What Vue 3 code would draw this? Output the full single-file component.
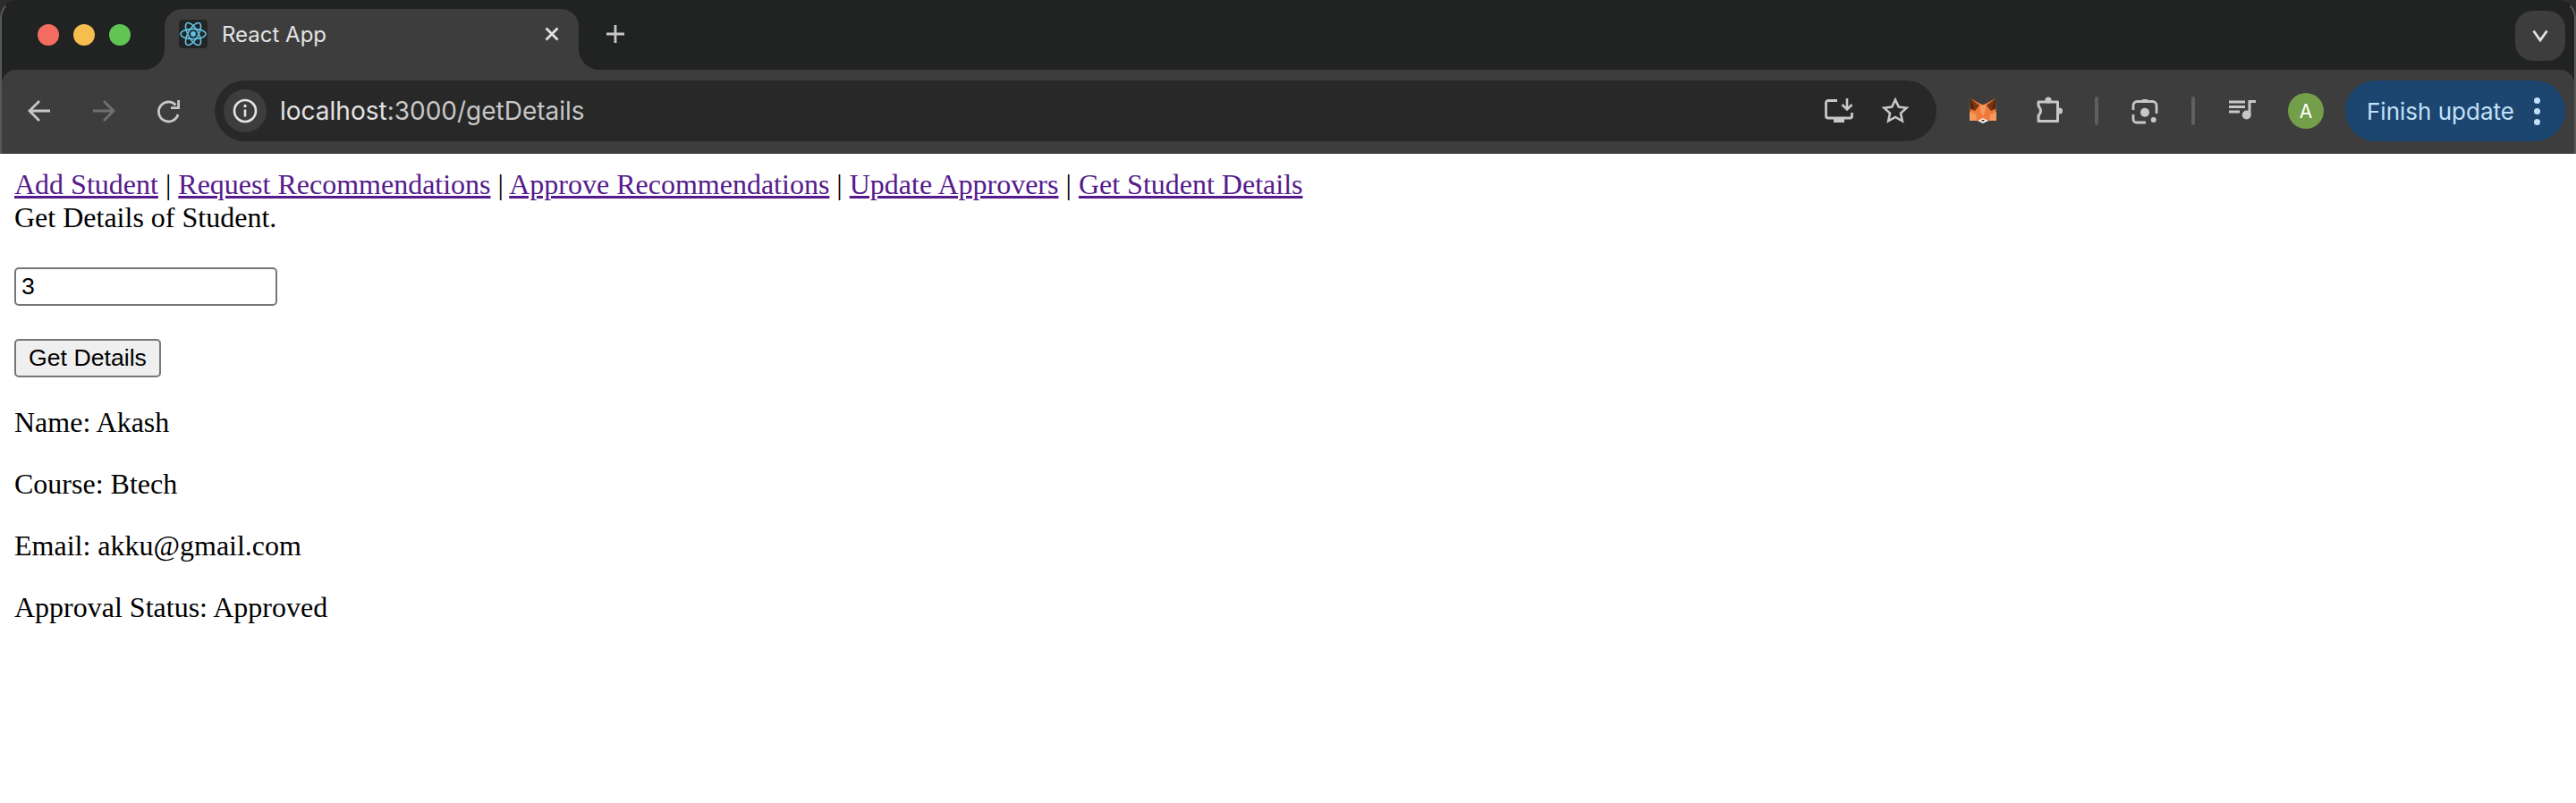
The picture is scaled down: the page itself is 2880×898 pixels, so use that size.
<script setup>
import { ref } from 'vue'

const navLinks = ['Add Student', 'Request Recommendations', 'Approve Recommendations', 'Update Approvers', 'Get Student Details']
const studentId = ref('3')
const details = [
  'Name: Akash',
  'Course: Btech',
  'Email: akku@gmail.com',
  'Approval Status: Approved'
]
</script>

<template>
  <div class="browser">
    <div class="frame">
      <div class="tabstrip">
        <div class="lights">
          <span class="light red"></span>
          <span class="light yellow"></span>
          <span class="light green"></span>
        </div>
        <div class="tab">
          <svg class="favicon" viewBox="0 0 32 32" width="32" height="32">
            <rect width="32" height="32" rx="4" fill="#222524" />
            <g fill="none" stroke="#61c3e6" stroke-width="1.6">
              <ellipse cx="16" cy="16" rx="14" ry="5.6" />
              <ellipse cx="16" cy="16" rx="14" ry="5.6" transform="rotate(60 16 16)" />
              <ellipse cx="16" cy="16" rx="14" ry="5.6" transform="rotate(120 16 16)" />
            </g>
            <circle cx="16" cy="16" r="2.9" fill="#61c3e6" />
          </svg>
          <span class="tab-title">React App</span>
          <svg class="tab-close" viewBox="0 0 16 16" width="16" height="16">
            <path d="M1.5 1.5 14.5 14.5M14.5 1.5 1.5 14.5" stroke="#e3e3e3" stroke-width="2.8" fill="none" />
          </svg>
        </div>
        <svg class="new-tab" viewBox="0 0 20 20" width="20" height="20">
          <path d="M10 0V20M0 10H20" stroke="#c7c7c7" stroke-width="2.8" fill="none" />
        </svg>
        <div class="tab-search">
          <svg viewBox="0 0 18 14" width="18" height="14">
            <path d="M1.5 1.5 9 12 16.5 1.5" stroke="#e3e3e3" stroke-width="2.8" fill="none" />
          </svg>
        </div>
      </div>

      <div class="toolbar">
        <div class="nav-buttons">
          <svg viewBox="0 0 32 32" width="32" height="32">
            <path d="M28 16H5M16 5 5 16 16 27" stroke="#c7c7c7" stroke-width="2.8" fill="none" />
          </svg>
          <svg viewBox="0 0 32 32" width="32" height="32">
            <path d="M4 16H27M16 5 27 16 16 27" stroke="#707070" stroke-width="2.8" fill="none" />
          </svg>
          <svg viewBox="0 0 32 32" width="32" height="32">
            <path d="M27 20A11 11 0 1 1 24.5 9.5" stroke="#c7c7c7" stroke-width="2.8" fill="none" />
            <path d="M27.6 4V12.6H19" stroke="#c7c7c7" stroke-width="2.8" fill="none" />
          </svg>
        </div>

        <div class="omnibox">
          <span class="info-chip">
            <svg viewBox="0 0 32 32" width="32" height="32">
              <circle cx="16" cy="16" r="12" stroke="#e3e3e3" stroke-width="2.6" fill="none" />
              <circle cx="16" cy="10.5" r="1.7" fill="#e3e3e3" />
              <path d="M16 14.5V22.5" stroke="#e3e3e3" stroke-width="2.6" />
            </svg>
          </span>
          <span class="url"><span class="url-host">localhost</span>:3000/getDetails</span>
          <svg class="install" viewBox="0 0 32 32" width="32" height="32">
            <path d="M14 4.5H4A2.5 2.5 0 0 0 1.5 7V21.5A2.5 2.5 0 0 0 4 24H28.5A2 2 0 0 0 30.5 22V18" stroke="#c7c7c7" stroke-width="2.8" fill="none" />
            <rect x="10" y="24" width="12" height="5" fill="#c7c7c7" />
            <path d="M25 2V13M19.5 9 25 14.5 30.5 9" stroke="#c7c7c7" stroke-width="2.6" fill="none" />
          </svg>
          <svg class="star" viewBox="0 0 32 32" width="32" height="32">
            <path d="M16 3.5 19.8 11.6 28.5 12.6 22 18.6 23.8 27.3 16 22.9 8.2 27.3 10 18.6 3.5 12.6 12.2 11.6Z" stroke="#c7c7c7" stroke-width="2.6" fill="none" />
          </svg>
        </div>

        <svg class="fox" viewBox="0 0 30 28" width="30" height="28">
          <path d="M1 0 12 6 15 7 18 6 29 0 30 25 22 25 18 26H12L8 25H0Z" fill="#ee7a3a" />
          <path d="M1 0 11 8 6 14 1 12Z" fill="#7a3512" />
          <path d="M29 0 19 8 24 14 29 12Z" fill="#7a3512" />
          <path d="M1 0 5 11 1 12Z" fill="#4f230d" />
          <path d="M29 0 25 11 29 12Z" fill="#4f230d" />
          <path d="M11 7 15 8 19 7 17 16 15 20 13 16Z" fill="#f59a60" />
          <path d="M0 15 7 18 8 25H0Z" fill="#f59a60" />
          <path d="M30 15 23 18 22 25H30Z" fill="#f59a60" />
          <path d="M9 25 15 22 21 25 15 28Z" fill="#f4efe9" />
          <path d="M13 24H17L15 26Z" fill="#3a2418" />
        </svg>
        <svg class="puzzle" viewBox="0 0 32 32" width="32" height="32">
          <path d="M5 6H26.5V27.5H5V21.5Q10 16 5 10.5Z" stroke="#c7c7c7" stroke-width="3" stroke-linejoin="round" fill="none" />
          <circle cx="16" cy="4" r="3.6" fill="#c7c7c7" />
          <circle cx="28.5" cy="16" r="3.6" fill="#c7c7c7" />
        </svg>
        <span class="divider first"></span>
        <svg class="lens" viewBox="0 0 32 32" width="32" height="32">
          <path d="M3 15V10A4.5 4.5 0 0 1 7.5 5.5H24.5A4.5 4.5 0 0 1 29 10V19M3 20V25.5A3.5 3.5 0 0 0 6.5 29H17" stroke="#c7c7c7" stroke-width="2.8" fill="none" />
          <path d="M12 5 13.5 3H18.5L20 5Z" fill="#c7c7c7" />
          <circle cx="16" cy="17.7" r="5" fill="#c7c7c7" />
          <circle cx="25.7" cy="26" r="3" fill="#c7c7c7" />
        </svg>
        <span class="divider"></span>
        <svg class="music" viewBox="0 0 32 32" width="32" height="32">
          <path d="M1 6H19M1 11.5H19M1 17H13" stroke="#c7c7c7" stroke-width="3" fill="none" />
          <path d="M24 21V5.5H31" stroke="#c7c7c7" stroke-width="3" fill="none" />
          <circle cx="20.7" cy="20.5" r="5" fill="#c7c7c7" />
        </svg>
        <span class="avatar">A</span>
        <div class="update-pill">
          <span>Finish update</span>
          <span class="dots"><i></i><i></i><i></i></span>
        </div>
      </div>
    </div>
  </div>

  <div class="page">
    <nav class="nav">
      <template v-for="(link, i) in navLinks" :key="link">
        <a href="#">{{ link }}</a>
        <template v-if="i < navLinks.length - 1"> | </template>
      </template>
    </nav>
    <div>Get Details of Student.</div>
    <form class="form" @submit.prevent>
      <input v-model="studentId" class="id-input" type="text" />
      <button class="submit" type="button">Get Details</button>
    </form>
    <p v-for="line in details" :key="line" class="detail">{{ line }}</p>
  </div>
</template>

<style scoped>
.browser {
  background: #2c2c2c;
  font-family: Inter, "Noto Sans", sans-serif;
}
.frame {
  border: 2px solid #585858;
  border-top-color: #202322;
  border-bottom: 0;
  border-radius: 20px 20px 0 0;
  background: #202322;
  overflow: hidden;
}
.tabstrip {
  height: 76px;
  display: flex;
  align-items: flex-end;
}
.lights {
  display: flex;
  gap: 16px;
  margin-left: 40px;
  align-self: flex-start;
  margin-top: 25px;
}
.light {
  width: 24px;
  height: 24px;
  border-radius: 50%;
}
.red { background: #f26d60; }
.yellow { background: #f6be4f; }
.green { background: #61c554; }
.tab {
  position: relative;
  width: 463px;
  height: 68px;
  margin-left: 38px;
  padding: 0 22px 12px 16px;
  box-sizing: border-box;
  display: flex;
  align-items: center;
  background: #3d3d3d;
  border-radius: 20px 20px 0 0;
}
.tab::before,
.tab::after {
  content: "";
  position: absolute;
  bottom: 0;
  width: 24px;
  height: 24px;
  background: radial-gradient(circle at 0 0, transparent 24px, #3d3d3d 24.5px);
}
.tab::before { left: -24px; }
.tab::after {
  right: -24px;
  background: radial-gradient(circle at 100% 0, transparent 24px, #3d3d3d 24.5px);
}
.favicon { flex: none; }
.tab-title {
  margin-left: 16px;
  color: #e3e3e3;
  font-size: 24px;
}
.tab-close { margin-left: auto; }
.new-tab {
  margin-left: 31px;
  align-self: flex-start;
  margin-top: 26px;
}
.tab-search {
  margin-left: auto;
  margin-right: 10px;
  align-self: flex-start;
  margin-top: 10px;
  width: 56px;
  height: 56px;
  border-radius: 20px;
  background: #3d3d3d;
  display: flex;
  align-items: center;
  justify-content: center;
}
.toolbar {
  height: 94px;
  padding: 12px 10px 14px 26px;
  box-sizing: border-box;
  display: flex;
  align-items: center;
  background: #3d3d3d;
  border-radius: 16px 16px 0 0;
}
.nav-buttons {
  display: flex;
  gap: 40px;
}
.omnibox {
  flex: 1;
  height: 68px;
  margin-left: 36px;
  padding: 0 30px 0 10px;
  display: flex;
  align-items: center;
  background: #282828;
  border-radius: 34px;
}
.info-chip {
  width: 48px;
  height: 48px;
  border-radius: 50%;
  background: #3d3d3d;
  display: flex;
  align-items: center;
  justify-content: center;
}
.url {
  margin-left: 15px;
  color: #c7c7c7;
  font-size: 28px;
}
.url-host { color: #e3e3e3; }
.install { margin-left: auto; }
.star { margin-left: 31px; }
.fox { margin-left: 37px; }
.puzzle { margin-left: 42px; }
.divider {
  width: 4px;
  height: 32px;
  margin-left: 36px;
  background: #5f5f5f;
  border-radius: 2px;
}
.lens { margin-left: 36px; }
.music { margin-left: 37px; }
.avatar {
  width: 40px;
  height: 40px;
  margin-left: 35px;
  border-radius: 50%;
  background: #739f4a;
  color: #fff;
  font-size: 21px;
  display: flex;
  align-items: center;
  justify-content: center;
}
.update-pill {
  width: 246px;
  height: 68px;
  margin-left: 24px;
  padding: 0 28px 0 24px;
  box-sizing: border-box;
  display: flex;
  align-items: center;
  justify-content: space-between;
  background: #1c466f;
  border-radius: 34px;
  color: #c2e0fb;
  font-size: 26px;
  white-space: nowrap;
}
.dots {
  display: flex;
  flex-direction: column;
  gap: 5px;
}
.dots i {
  width: 7px;
  height: 7px;
  border-radius: 50%;
  background: #c2e0fb;
}
.page {
  padding: 16px;
  font-family: "Liberation Serif", "Times New Roman", serif;
  font-size: 32px;
  color: #000;
}
.nav a {
  color: #551a8b;
}
.form {
  margin-top: 37px;
}
.id-input {
  display: block;
  width: 294px;
  height: 43px;
  padding: 2px 6px;
  box-sizing: border-box;
  border: 2px solid #767676;
  border-radius: 5px;
  font-family: "Liberation Sans", Arial, sans-serif;
  font-size: 26.67px;
  color: #000;
  background: #fff;
}
.submit {
  display: block;
  width: 164px;
  height: 43px;
  margin-top: 37px;
  padding: 0;
  border: 2px solid #767676;
  border-radius: 5px;
  background: #efefef;
  font-family: "Liberation Sans", Arial, sans-serif;
  font-size: 26.67px;
  color: #000;
}
.detail {
  margin: 32px 0;
}
</style>

<style>
html, body {
  background: #fff;
  overflow: hidden;
}
</style>
